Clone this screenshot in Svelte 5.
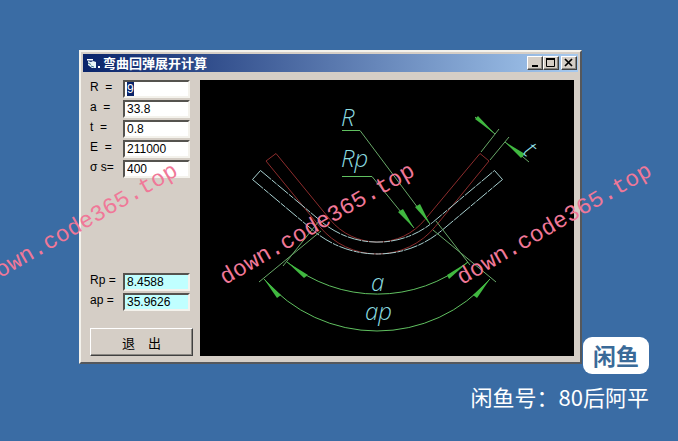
<script lang="ts">
    import { onMount } from 'svelte';

    let inputs = [
        { id: 'radius', label: 'R  =', value: '9' },
        { id: 'angle', label: 'a  =', value: '33.8' },
        { id: 'thickness', label: 't  =', value: '0.8' },
        { id: 'modulus', label: 'E  =', value: '211000' },
        { id: 'yield', label: 'σ s=', value: '400' }
    ];

    const results = [
        { id: 'radius-p', label: 'Rp =', value: '8.4588' },
        { id: 'angle-p', label: 'ap =', value: '35.9626' }
    ];

    const marks = ['first', 'second', 'third'];

    onMount(() => {
        const first = document.getElementById('radius') as HTMLInputElement;
        first.focus();
        first.select();
    });
</script>

<main class="desktop">
    <section class="window">
        <header class="titlebar">
            <svg class="app-icon" viewBox="0 0 14 14" aria-hidden="true">
                <path d="M2 5l3 1 2-1 3 1v6H6L2 9z" fill="#e8f4f8" />
                <path d="M1 3h6v1.500H1z" fill="#fff" />
                <path d="M2 7l3 1.500M5 10l3 1" stroke="#3c7890" fill="none" />
                <path d="M12 10h2v2h-2z" fill="#fff" />
            </svg>
            <h1>弯曲回弹展开计算</h1>
            <div class="controls">
                <button aria-label="Minimize">
                    <svg viewBox="0 0 12 10"><path d="M3 8h6" stroke="#000" stroke-width="2" /></svg>
                </button>
                <button aria-label="Maximize">
                    <svg viewBox="0 0 12 10">
                        <path d="M1.500 1v7.500h8V1" stroke="#000" fill="none" />
                        <path d="M1 1h9" stroke="#000" stroke-width="2" />
                    </svg>
                </button>
                <button class="close" aria-label="Close">
                    <svg viewBox="0 0 12 10"><path d="M2 1l7 7M9 1l-7 7" stroke="#000" stroke-width="1.700" /></svg>
                </button>
            </div>
        </header>

        <div class="content">
            <form class="panel" on:submit|preventDefault>
                {#each inputs as field}
                    <div class="row">
                        <label for={field.id}>{field.label}</label>
                        <input id={field.id} type="text" bind:value={field.value} />
                    </div>
                {/each}
                <div class="results">
                    {#each results as field}
                        <div class="row">
                            <label for={field.id}>{field.label}</label>
                            <input id={field.id} class="output" type="text" value={field.value} readonly />
                        </div>
                    {/each}
                </div>
                <button class="exit" type="button">退　出</button>
            </form>

            <svg class="drawing" viewBox="200 80 374 276" role="img" aria-label="R Rp t a ap">
                <rect x="200" y="80" width="374" height="276" fill="#000" />

                <!-- sheet before springback -->
                <g class="red">
                    <path d="M276 153.500L330 219.500A61.300 61.300 0 0 0 425 219.500L480 153.500L489 161L435.300 226.600A74.700 74.700 0 0 1 319.700 226.600L266 161Z" />
                </g>

                <!-- sheet after springback -->
                <g class="white">
                    <path d="M260.500 170.500L252.500 179.500M494.500 170.500L502.500 179.500" />
                    <path class="dashed" d="M260.500 170.500L321.400 221.600A87 87 0 0 0 433.600 221.600L494.500 170.500" />
                    <path class="dashed" d="M252.500 179.500L313.500 230.700A99.600 99.600 0 0 0 441.500 230.700L502.500 179.500" />
                </g>

                <!-- leaders, extension lines and dimension arcs -->
                <g class="green">
                    <path class="bright" d="M342 130.500H360M342 176.500H372" />
                    <path d="M360 130.500L430 224M372 176.500L414 228" />
                    <path d="M481 152L499 129M490 160L509 137" />
                    <path d="M475 117L495 134M505 142L529 162" />
                    <path d="M319 221L283 266M321 231L259 282M436 221L470 265M433 230L496 282" />
                    <path class="bright" d="M287 262A143.600 143.600 0 0 0 468 262" />
                    <path class="bright" d="M264 279A148.800 148.800 0 0 0 490 279" />
                </g>
                <g class="heads">
                    <path d="M430 224L415 207L420 204Z" />
                    <path d="M414 228L398 212L403 209Z" />
                    <path d="M495 134L475 119L478 116Z" />
                    <path d="M505 142L521 158L525 154Z" />
                    <path d="M287 262L304 278L308 275Z" />
                    <path d="M264 279L277 298L281 295Z" />
                    <path d="M468 262L447 275L449 279Z" />
                    <path d="M490 279L473 295L477 298Z" />
                </g>

                <g class="names">
                    <text x="341" y="126">R</text>
                    <text x="341" y="167">Rp</text>
                    <text x="371" y="291">a</text>
                    <text x="365" y="320">ap</text>
                    <text transform="translate(522 153) rotate(40)">t</text>
                </g>
            </svg>
        </div>
    </section>

    <footer class="seller">
        <strong class="logo">闲鱼</strong>
        <p>闲鱼号：80后阿平</p>
    </footer>

    {#each marks as mark}
        <span class="mark {mark}">down.code365.top</span>
    {/each}
</main>

<style>
    :global(body) {
        margin: 0;
        background: #3a6ca4;
    }

    .desktop {
        position: relative;
        box-sizing: border-box;
        min-height: 100vh;
        padding: 50px 29px 0 79px;
        overflow: hidden;
        font-family: "Liberation Sans", "Noto Sans CJK SC", sans-serif;
    }

    .window {
        margin-right: 67px;
        padding: 2px;
        background: #d5cec6;
        border: 2px solid;
        border-color: #f4f2ec #55585c #55585c #f4f2ec;
    }

    .titlebar {
        display: flex;
        align-items: center;
        height: 18px;
        padding: 0 1px 0 3px;
        background: linear-gradient(to right, #0a246a, #a6caf0);
    }

    .app-icon {
        width: 14px;
        height: 14px;
    }

    h1 {
        flex: 1;
        margin: 0 0 0 3px;
        color: #fff;
        font: bold 13px/18px "Noto Sans CJK SC", sans-serif;
    }

    .controls {
        display: flex;
    }

    .controls button {
        box-sizing: border-box;
        width: 16px;
        height: 14px;
        padding: 0;
        background: #d5cec6;
        border: 1px solid;
        border-color: #fff #404040 #404040 #fff;
        box-shadow: inset -1px -1px #8a8782;
    }

    .controls svg {
        display: block;
        width: 12px;
        height: 10px;
        margin: 1px;
    }

    .controls .close {
        margin-left: 2px;
    }

    .content {
        display: grid;
        grid-template-columns: 103px 1fr;
        gap: 7px;
        padding: 8px 4px 4px 7px;
    }

    .panel {
        display: flex;
        flex-direction: column;
        gap: 2px;
    }

    .row {
        display: flex;
        align-items: flex-start;
    }

    label {
        width: 33px;
        font-size: 12px;
        line-height: 14px;
        white-space: pre;
    }

    input {
        box-sizing: border-box;
        width: 67px;
        height: 18px;
        padding: 0 2px;
        color: #000;
        background: #fff;
        border: 2px solid;
        border-color: #55534f #f4f2ec #f4f2ec #55534f;
        border-radius: 0;
        outline: none;
        font: 12px "Liberation Sans", sans-serif;
    }

    input::selection {
        color: #fff;
        background: #0a246a;
    }

    .output {
        background: #c0ffff;
    }

    .results {
        display: flex;
        flex-direction: column;
        gap: 2px;
        margin-top: auto;
    }

    .exit {
        height: 28px;
        margin-top: 15px;
        padding: 0;
        color: #000;
        background: #d5cec6;
        border: 1px solid;
        border-color: #fff #404040 #404040 #fff;
        box-shadow: inset -1px -1px #8a8782;
        font: 13px "Noto Sans CJK SC", sans-serif;
    }

    .drawing {
        display: block;
        width: 100%;
    }

    .drawing path {
        fill: none;
    }

    .red {
        stroke: #8c2c2c;
    }

    .white {
        stroke: #a8d0d0;
    }

    .dashed {
        stroke-dasharray: 14 1 6 1;
    }

    .green {
        stroke: #68a868;
    }

    .green .bright {
        stroke: #60c060;
    }

    .drawing .heads path {
        fill: #40b840;
    }

    .names text {
        fill: #8cdce0;
        font: italic 300 24px "Open Sans", sans-serif;
    }

    .seller {
        position: relative;
        display: flex;
        flex-direction: column;
        align-items: flex-end;
        gap: 6px;
        margin-top: -27px;
        color: #fff;
        font-family: "Noto Sans CJK SC", sans-serif;
    }

    .logo {
        padding: 0 10px;
        color: #3a6a98;
        background: #fff;
        border-radius: 9px;
        font-size: 23px;
        font-weight: 700;
        line-height: 37px;
    }

    .seller p {
        margin: 0;
        font-size: 22px;
        line-height: 32px;
    }

    .mark {
        position: absolute;
        top: 264px;
        color: #f07898;
        font: 23px/28px "Liberation Mono", monospace;
        white-space: nowrap;
        transform: rotate(-30deg);
        transform-origin: left bottom;
        pointer-events: none;
    }

    .first {
        left: -8px;
    }

    .second {
        left: 229px;
    }

    .third {
        left: 466px;
    }
</style>
